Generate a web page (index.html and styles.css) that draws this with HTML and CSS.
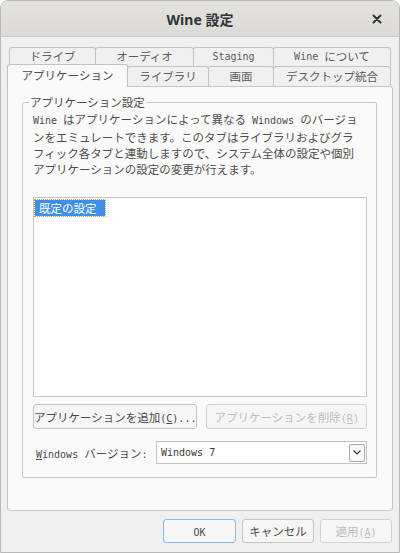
FILE: index.html
```html
<!DOCTYPE html>
<html lang="ja">
<head>
    <meta charset="UTF-8">
    <meta name="viewport" content="width=device-width, initial-scale=1.0">
    <title>Wine 設定</title>
    <link rel="stylesheet" href="styles.css">
</head>
<body>
    <div class="window">
        <div class="titlebar">
            <span></span>
            <h1 class="title">Wine 設定</h1>
            <button class="close" aria-label="閉じる">
                <svg width="10" height="10" viewBox="0 0 10 10">
                    <path d="M1.5 1.5 L8.5 8.5 M8.5 1.5 L1.5 8.5" stroke="#2e3436" stroke-width="2" stroke-linecap="round"/>
                </svg>
            </button>
        </div>

        <div class="content">
            <div class="tab-row row-top">
                <div class="tab w-drive">ドライブ</div>
                <div class="tab w-audio">オーディオ</div>
                <div class="tab w-staging"><span class="en">Staging</span></div>
                <div class="tab w-about"><span class="en">Wine&nbsp;</span>について</div>
            </div>
            <div class="tab-row row-bottom">
                <div class="tab active w-apps">アプリケーション</div>
                <div class="tab w-libs">ライブラリ</div>
                <div class="tab w-screen">画面</div>
                <div class="tab w-desktop">デスクトップ統合</div>
            </div>

            <div class="panel">
                <fieldset class="group">
                    <legend>アプリケーション設定</legend>
                    <p class="desc">
                        <span class="en">Wine&nbsp;</span>はアプリケーションによって異なる<span class="en">&nbsp;Windows&nbsp;</span>のバージョ<br>
                        ンをエミュレートできます。このタブはライブラリおよびグラ<br>
                        フィック各タブと連動しますので、システム全体の設定や個別<br>
                        アプリケーションの設定の変更が行えます。
                    </p>
                    <div class="list">
                        <div class="list-item selected">既定の設定</div>
                    </div>
                    <div class="btn-row">
                        <button class="btn">アプリケーションを追加<span class="en">(<u>C</u>)...</span></button>
                        <button class="btn" disabled>アプリケーションを削除<span class="en">(<u>R</u>)</span></button>
                    </div>
                    <div class="version-row">
                        <label class="version-label"><span class="en"><u>W</u>indows&nbsp;</span>バージョン<span class="en">:</span></label>
                        <div class="combo">
                            <span class="en">Windows 7</span>
                            <span class="combo-arrow">
                                <svg width="8" height="5" viewBox="0 0 8 5">
                                    <path d="M0.5 0.5 L4 4 L7.5 0.5" fill="none" stroke="#333" stroke-width="1.1"/>
                                </svg>
                            </span>
                        </div>
                    </div>
                </fieldset>
            </div>

            <div class="dialog-buttons">
                <button class="btn btn-dlg default"><span class="en">OK</span></button>
                <button class="btn btn-dlg">キャンセル</button>
                <button class="btn btn-dlg" disabled>適用<span class="en">(<u>A</u>)</span></button>
            </div>
        </div>
    </div>
</body>
</html>
```

FILE: styles.css
```css
* {
    box-sizing: border-box;
}
body {
    margin: 0;
    font-family: "Noto Sans CJK JP", "DejaVu Sans", sans-serif;
    font-size: 11.5px;
    color: #4a4a4a;
    background: #ffffff;
}
.en {
    font-family: "DejaVu Sans Mono", "Noto Sans CJK JP", monospace;
    font-size: 10px;
}
.window {
    width: 400px;
    height: 553px;
    border: 1px solid #b9b9b9;
    border-radius: 8px 8px 0 0;
    overflow: hidden;
    background: #f0f0f0;
    display: flex;
    flex-direction: column;
}
.titlebar {
    height: 36px;
    flex: none;
    display: grid;
    grid-template-columns: 1fr auto 1fr;
    align-items: center;
    background: linear-gradient(#e4e2df, #dddbd8);
    border-bottom: 1px solid #cdcbc8;
}
.title {
    margin: 0;
    font-family: "Noto Sans", "Noto Sans CJK JP", sans-serif;
    font-size: 14px;
    font-weight: bold;
    color: #2e3436;
}
.close {
    justify-self: end;
    margin-right: 13px;
    width: 18px;
    height: 18px;
    padding: 0;
    border: none;
    background: none;
    display: flex;
    align-items: center;
    justify-content: center;
}
.content {
    flex: 1;
    display: flex;
    flex-direction: column;
    padding: 10px 6px 0 6px;
}
.tab-row {
    display: flex;
    height: 20px;
}
.row-top {
    height: 19px;
    padding-left: 2px;
}
.tab {
    height: 20px;
    margin-left: -1px;
    border: 1px solid #c3c3c3;
    border-bottom: none;
    border-radius: 3px 3px 0 0;
    background: #f0f0f0;
    color: #5c5c5c;
    display: flex;
    align-items: center;
    justify-content: center;
    line-height: 1;
}
.tab:first-child {
    margin-left: 0;
}
.row-top .tab {
    height: 19px;
}
.tab.active {
    position: relative;
    z-index: 1;
    height: 23px;
    margin-top: -2px;
    background: #fafafa;
    color: #4a4a4a;
}
.w-drive { width: 87px; }
.w-audio { width: 99px; }
.w-staging { width: 81px; }
.w-about { width: 118px; }
.w-apps { width: 121px; }
.w-libs { width: 82px; }
.w-screen { width: 66px; }
.w-desktop { width: 118px; }

.panel {
    height: 425px;
    flex: none;
    border: 1px solid #c6c6c6;
    border-radius: 0 3px 3px 3px;
    background: #fafafa;
    padding: 7px 15px 0 14px;
}
.group {
    margin: 0;
    height: 384px;
    border: 1px solid #c8c8c8;
    border-radius: 2px;
    padding: 0 9px 0 10px;
    display: flex;
    flex-direction: column;
}
.group legend {
    margin-left: -4px;
    padding: 0 1px;
    line-height: 16px;
    color: #4a4a4a;
}
.desc {
    margin: 1px 0 0;
    line-height: 16px;
    white-space: nowrap;
    color: #4d4d4d;
}
.list {
    margin-top: 20px;
    height: 200px;
    border: 1px solid #c6c6c6;
    background: #ffffff;
    padding: 2px 1px;
}
.list-item {
    display: inline-block;
    height: 16px;
    line-height: 16px;
    padding: 0 8px 0 4px;
}
.list-item.selected {
    background: #3d8fe8;
    color: #ffffff;
    outline: 1px dotted #c9a25a;
}
.btn-row {
    display: flex;
    gap: 9px;
    margin-top: 7px;
}
.btn {
    font-family: inherit;
    font-size: 11.5px;
    color: #4a4a4a;
    background: #f6f6f6;
    border: 1px solid #c4c4c4;
    border-radius: 3px;
    padding: 0;
    height: 25px;
    white-space: nowrap;
}
.btn-row .btn {
    flex: 1;
}
.btn:disabled {
    color: #bdbdbd;
    border-color: #d2d2d2;
}
.version-row {
    display: flex;
    align-items: center;
    margin-top: 12px;
}
.version-label {
    width: 123px;
    padding-left: 3px;
    color: #4a4a4a;
    white-space: nowrap;
}
.combo {
    flex: 1;
    height: 23px;
    border: 1px solid #c4c4c4;
    background: #ffffff;
    display: flex;
    align-items: center;
    justify-content: space-between;
    padding: 0 1px 0 4px;
    color: #3a3a3a;
}
.combo-arrow {
    width: 16px;
    height: 18px;
    border: 1px solid #a8a8a8;
    border-radius: 2px;
    background: #f8f8f8;
    display: flex;
    align-items: center;
    justify-content: center;
}
.dialog-buttons {
    display: flex;
    justify-content: flex-end;
    gap: 6px;
    padding: 8px 1px 0 0;
}
.btn-dlg {
    width: 72px;
    height: 24px;
}
.btn-dlg.default {
    width: 73px;
    border-color: #8dbaeb;
}
```
